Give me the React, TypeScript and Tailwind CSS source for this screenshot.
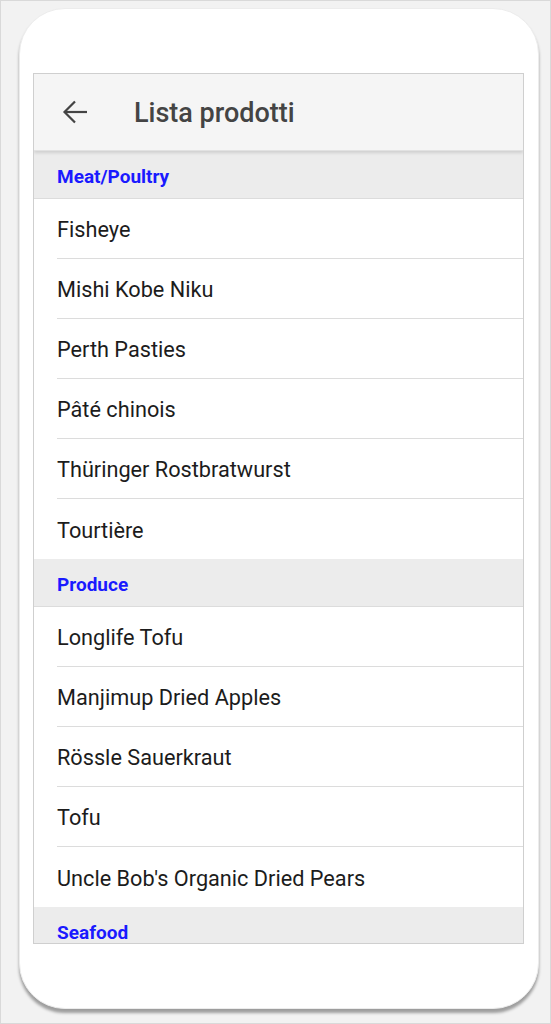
import React from "react";

const groups: { name: string; items: string[] }[] = [
  {
    name: "Meat/Poultry",
    items: ["Fisheye", "Mishi Kobe Niku", "Perth Pasties", "Pâté chinois", "Thüringer Rostbratwurst", "Tourtière"],
  },
  {
    name: "Produce",
    items: ["Longlife Tofu", "Manjimup Dried Apples", "Rössle Sauerkraut", "Tofu", "Uncle Bob's Organic Dried Pears"],
  },
  {
    name: "Seafood",
    items: [],
  },
];

export default function App() {
  return (
    <div
      className="w-[551px] h-[1024px] bg-[#f2f2f2] border border-[#d9d9d9] overflow-hidden"
      style={{ fontFamily: "Roboto, 'Noto Sans', sans-serif" }}
    >
      <div className="ml-[18px] mt-[7px] w-[520px] h-[1001px] bg-white rounded-[46px] border border-[#ececec] shadow-[0_4px_3px_rgba(0,0,0,0.35)] pl-[13px] pr-[14px] pt-[64px]">
        <div className="w-[491px] h-[871px] border border-[#cfcfcf] overflow-hidden flex flex-col bg-white">
          <div className="relative z-10 h-[77px] shrink-0 bg-[#f5f5f5] flex items-center shadow-[0_2px_3px_rgba(0,0,0,0.12)] border-b border-[#e2e2e2]">
            <svg width="26" height="24" viewBox="0 0 26 24" className="ml-[28px]" fill="none" stroke="#444" strokeWidth="2.2">
              <path d="M25 12H3" />
              <path d="M13 1.5L2.5 12L13 22.5" strokeLinejoin="miter" />
            </svg>
            <div className="ml-[46px] pt-[2px] text-[27px] font-medium text-[#444] leading-none">Lista prodotti</div>
          </div>
          <div className="flex-1 overflow-hidden">
            {groups.map((g) => (
              <div key={g.name}>
                <div className="h-[48px] bg-[#ececec] border-b border-[#dcdcdc] flex items-center pl-[23px] pt-[5px]">
                  <span className="text-[19px] font-bold text-[#1a1aff]">{g.name}</span>
                </div>
                {g.items.map((it, i) => (
                  <div key={it} className="pl-[23px]">
                    <div
                      className={
                        i === g.items.length - 1
                          ? "h-[60px] flex items-center pt-[4px] text-[21.7px] text-[#1c1c1c]"
                          : "h-[60px] flex items-center pt-[4px] text-[21.7px] text-[#1c1c1c] border-b border-[#dcdcdc]"
                      }
                    >
                      {it}
                    </div>
                  </div>
                ))}
              </div>
            ))}
          </div>
        </div>
      </div>
    </div>
  );
}
